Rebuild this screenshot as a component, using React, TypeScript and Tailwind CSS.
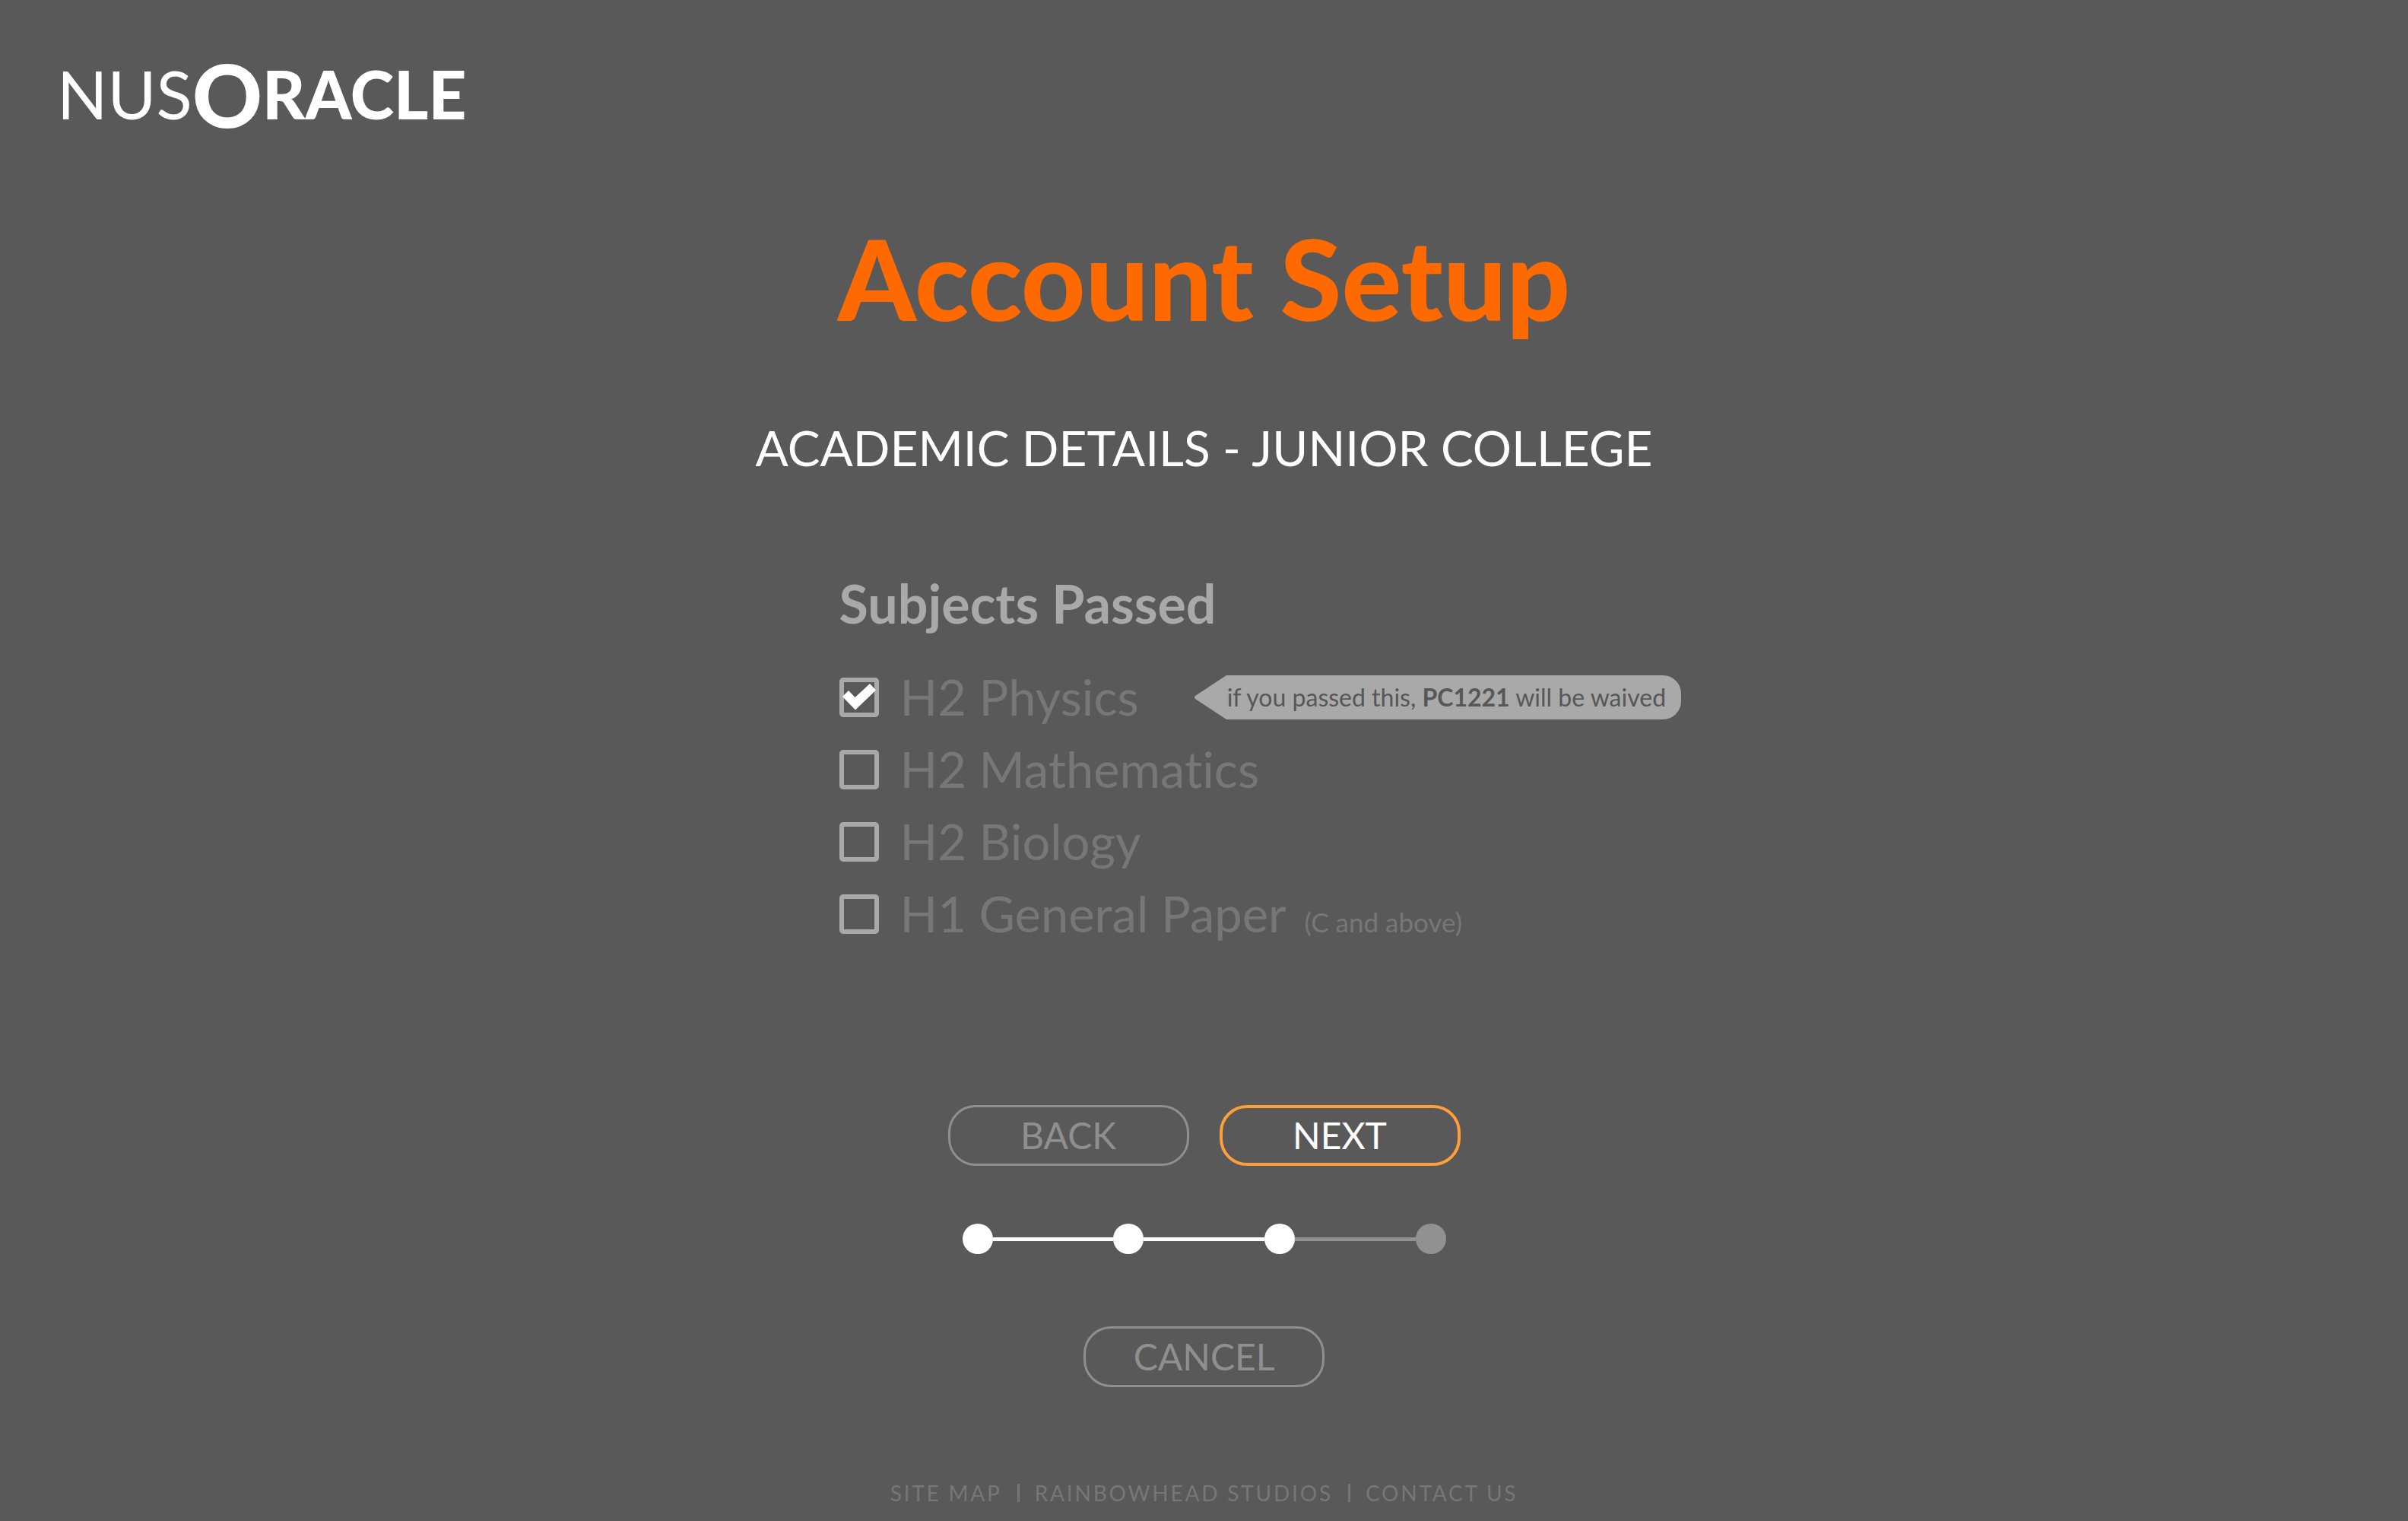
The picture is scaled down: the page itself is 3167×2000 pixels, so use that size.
import type { ReactNode } from "react";

type Subject = {
  id: string;
  label: string;
  note?: string;
  checked?: boolean;
  hint?: ReactNode;
};

const subjects: Subject[] = [
  {
    id: "h2-physics",
    label: "H2 Physics",
    checked: true,
    hint: (
      <>
        if you passed this, <strong className="font-bold">PC1221</strong> will be waived
      </>
    ),
  },
  { id: "h2-mathematics", label: "H2 Mathematics" },
  { id: "h2-biology", label: "H2 Biology" },
  { id: "h1-general-paper", label: "H1 General Paper", note: "(C and above)" },
];

const steps = [true, true, true, false];

const footerLinks = ["SITE MAP", "RAINBOWHEAD STUDIOS", "CONTACT US"];

function Logo() {
  return (
    <a
      href="#"
      aria-label="NUS Oracle"
      className="flex items-center text-[87px] leading-[108px] text-white"
    >
      <span>NUS</span>
      <span className="text-[114px] font-black">O</span>
      <span className="font-black">RACLE</span>
    </a>
  );
}

function Hint({ children }: { children: ReactNode }) {
  return (
    <div className="ml-[72px] flex h-[58px] shrink-0 items-stretch text-[32px] whitespace-nowrap text-[#575757]">
      <svg viewBox="0 0 44 58" className="h-full w-11 fill-[#a9a9a9]" aria-hidden="true">
        <path d="M44 0H43L2 27Q0 29 2 31L43 58H44Z" />
      </svg>
      <p className="flex items-center rounded-r-[24px] bg-[#a9a9a9] pr-5 leading-10">
        <span>{children}</span>
      </p>
    </div>
  );
}

function SubjectRow({ subject }: { subject: Subject }) {
  return (
    <li className="flex h-[95px] items-center">
      <span className="relative mr-7 size-[52px] shrink-0">
        <input
          id={subject.id}
          type="checkbox"
          defaultChecked={subject.checked}
          className="peer block size-full appearance-none rounded-[5px] border-[6px] border-[#a9a9a9]"
        />
        <svg
          viewBox="0 0 52 52"
          aria-hidden="true"
          className="pointer-events-none absolute inset-0 hidden fill-white peer-checked:block"
        >
          <path d="M4 25L12 17L20.5 26L40 8L48 16.5L21 42.5Z" />
        </svg>
      </span>
      <label htmlFor={subject.id} className="text-[65px] leading-[95px] whitespace-nowrap text-[#777777]">
        {subject.label}
        {subject.note && <span className="ml-6 text-[35px] leading-none">{subject.note}</span>}
      </label>
      {subject.hint && <Hint>{subject.hint}</Hint>}
    </li>
  );
}

function Stepper() {
  return (
    <ol aria-label="Progress" className="mt-[76px] flex w-[636px] items-center">
      {steps.map((done, i) => (
        <li key={i} className={i === 0 ? "flex items-center" : "flex flex-1 items-center"}>
          {i > 0 && <span className={done ? "h-[5px] flex-1 bg-white" : "h-[5px] flex-1 bg-[#919191]"} />}
          <span className={done ? "size-10 rounded-full bg-white" : "size-10 rounded-full bg-[#919191]"} />
        </li>
      ))}
    </ol>
  );
}

const buttonBase = "h-20 w-[317px] rounded-[36px] text-[48px] leading-none";

export default function App() {
  return (
    <div className="flex min-h-screen flex-col bg-[#595959] font-[Lato,sans-serif] [font-variant-ligatures:none]">
      <header className="flex px-[75px] pt-[70px]">
        <Logo />
      </header>

      <main className="mt-[107px] flex flex-col items-center">
        <h1 className="text-[147px] leading-[160px] font-black text-[#ff6a00]">Account Setup</h1>
        <h2 className="mt-[104px] text-[64px] leading-[80px] text-white">ACADEMIC DETAILS - JUNIOR COLLEGE</h2>

        <form className="flex flex-col items-center" onSubmit={(e) => e.preventDefault()}>
          <fieldset className="mt-[124px] w-[960px] min-w-0">
            <legend className="text-[70px] leading-[80px] font-bold text-[#a9a9a9]">Subjects Passed</legend>
            <ul className="pt-[36px]">
              {subjects.map((subject) => (
                <SubjectRow key={subject.id} subject={subject} />
              ))}
            </ul>
          </fieldset>

          <div className="mt-[204px] flex gap-10">
            <button type="button" className={`${buttonBase} border-[3px] border-[#8f8f8f] text-[#8f8f8f]`}>
              BACK
            </button>
            <button type="submit" className={`${buttonBase} border-4 border-[#ff9f3a] text-white`}>
              NEXT
            </button>
          </div>

          <Stepper />

          <button type="button" className={`${buttonBase} mt-[95px] border-[3px] border-[#8f8f8f] text-[#8f8f8f]`}>
            CANCEL
          </button>
        </form>
      </main>

      <footer className="mt-auto flex justify-center pb-[21px]">
        <nav className="flex items-center text-[28px] leading-8 tracking-widest text-[#777777]">
          {footerLinks.map((link, i) => (
            <span key={link} className="flex items-center">
              {i > 0 && <span className="mx-5 h-6 w-[3px] bg-[#777777]" />}
              <a href="#">{link}</a>
            </span>
          ))}
        </nav>
      </footer>
    </div>
  );
}
